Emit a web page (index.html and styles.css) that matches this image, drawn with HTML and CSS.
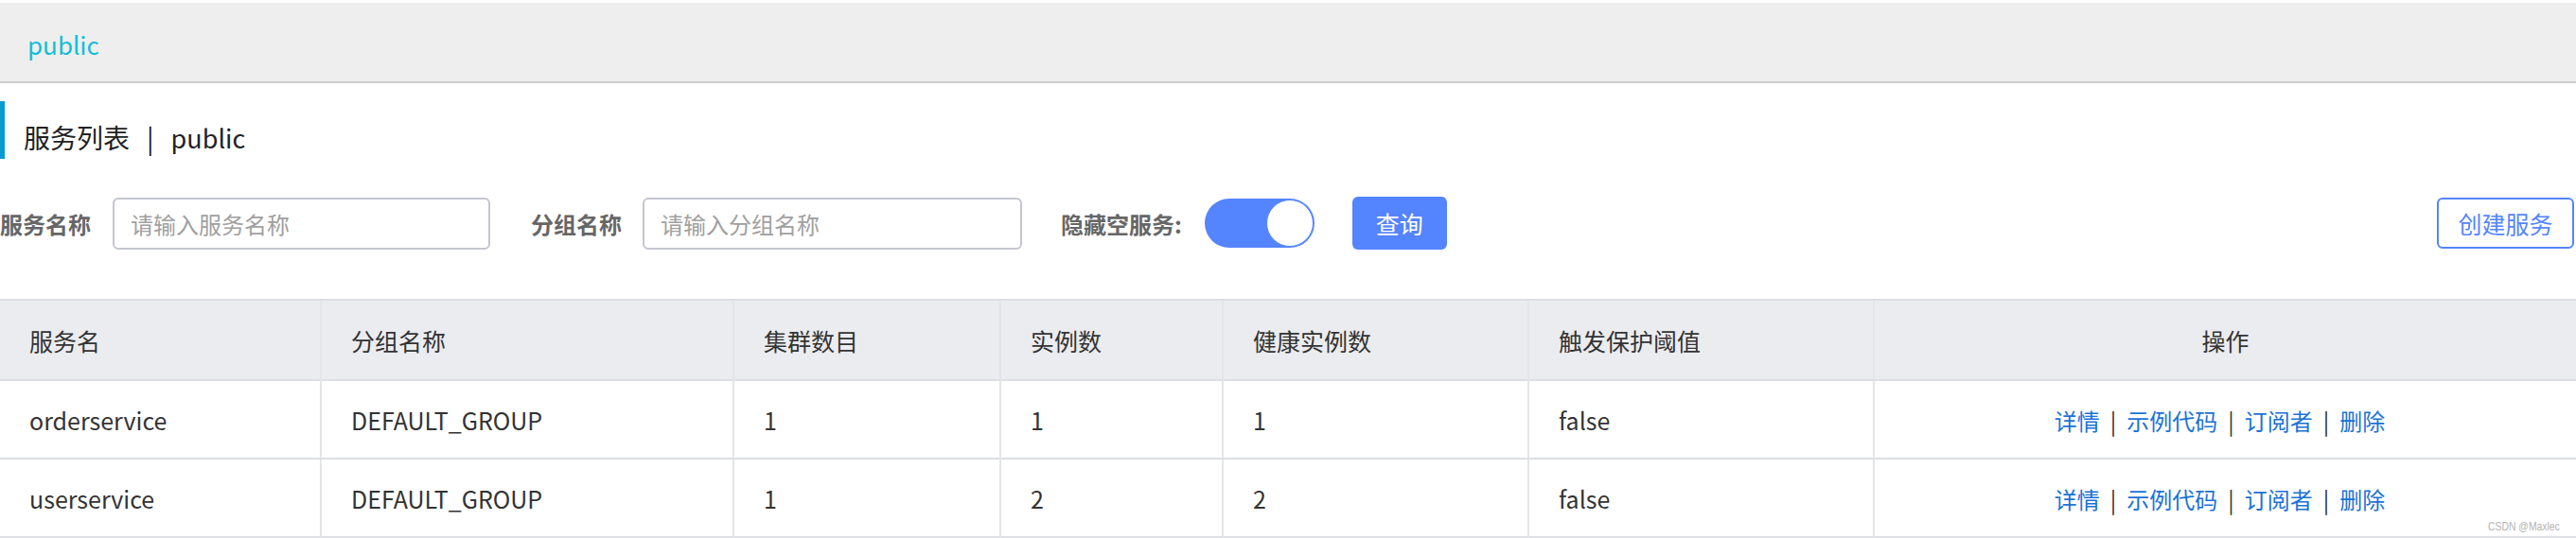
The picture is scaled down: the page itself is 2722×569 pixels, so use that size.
FILE: index.html
```html
<!DOCTYPE html>
<html lang="zh-CN">
<head>
<meta charset="utf-8">
<title>服务列表</title>
<link rel="stylesheet" href="styles.css">
</head>
<body>
  <div class="topbar"><span class="ns-link">public</span></div>

  <div class="page-title">服务列表<span class="title-sep">|</span><span class="title-ns">public</span></div>

  <div class="filters">
    <label class="f-label lbl-1">服务名称</label>
    <input class="f-input in-1" type="text" placeholder="请输入服务名称">
    <label class="f-label lbl-2">分组名称</label>
    <input class="f-input in-2" type="text" placeholder="请输入分组名称">
    <label class="f-label lbl-3">隐藏空服务:</label>
    <div class="switch"><span class="knob"></span></div>
    <button class="btn-primary">查询</button>
    <button class="btn-outline">创建服务</button>
  </div>

  <div class="table-wrap">
    <table class="svc-table">
      <colgroup>
        <col class="c1"><col class="c2"><col class="c3"><col class="c4"><col class="c5"><col class="c6"><col class="c7">
      </colgroup>
      <thead>
        <tr>
          <th>服务名</th>
          <th>分组名称</th>
          <th>集群数目</th>
          <th>实例数</th>
          <th>健康实例数</th>
          <th>触发保护阈值</th>
          <th class="center">操作</th>
        </tr>
      </thead>
      <tbody>
        <tr>
          <td>orderservice</td>
          <td>DEFAULT_GROUP</td>
          <td>1</td>
          <td>1</td>
          <td>1</td>
          <td>false</td>
          <td class="center ops"><a>详情</a><span class="sep">|</span><a>示例代码</a><span class="sep">|</span><a>订阅者</a><span class="sep">|</span><a>删除</a></td>
        </tr>
        <tr>
          <td>userservice</td>
          <td>DEFAULT_GROUP</td>
          <td>1</td>
          <td>2</td>
          <td>2</td>
          <td>false</td>
          <td class="center ops"><a>详情</a><span class="sep">|</span><a>示例代码</a><span class="sep">|</span><a>订阅者</a><span class="sep">|</span><a>删除</a></td>
        </tr>
      </tbody>
    </table>
    <div class="watermark">CSDN @Maxlec</div>
  </div>
</body>
</html>
```

FILE: styles.css
```css
html, body {
  margin: 0;
  padding: 0;
  background: #ffffff;
}
body {
  font-family: "Noto Sans CJK SC", "Open Sans", sans-serif;
  color: #333333;
  width: 2722px;
  height: 569px;
  overflow: hidden;
}

/* top namespace bar */
.topbar {
  margin-top: 3px;
  height: 85px;
  box-sizing: border-box;
  background: #eeeeee;
  border-bottom: 2px solid #cccccc;
  padding: 25px 29px 0;
  line-height: 38px;
}
.ns-link {
  font-size: 26px;
  color: #14bdd6;
}

/* page title */
.page-title {
  margin-top: 19px;
  height: 61px;
  box-sizing: border-box;
  border-left: 5px solid #0a9ad2;
  padding: 18px 0 0 20px;
  line-height: 40px;
  font-size: 28px;
  color: #222222;
}
.title-sep {
  margin: 0 18px 0 18px;
}
.title-ns {
  font-size: 27px;
}

/* filter row */
.filters {
  margin-top: 40px;
  height: 56px;
  display: flex;
  align-items: center;
}
.f-label {
  font-size: 24px;
  font-weight: bold;
  color: #666666;
  white-space: nowrap;
}
.lbl-1 { margin-right: 23px; }
.lbl-2 { margin-right: 22px; }
.lbl-3 { margin-right: 24px; }
.f-input {
  height: 55px;
  box-sizing: border-box;
  border: 2px solid #c4c6cf;
  border-radius: 6px;
  padding: 0 17px;
  font-family: "Noto Sans CJK SC", "Open Sans", sans-serif;
  font-size: 24px;
  color: #333333;
  outline: none;
  background: #ffffff;
}
.f-input::placeholder {
  color: #a0a0a0;
}
.in-1 { width: 399px; margin-right: 43px; }
.in-2 { width: 401px; margin-right: 41px; }

.switch {
  width: 116px;
  height: 52px;
  border-radius: 26px;
  background: #5584ff;
  display: flex;
  align-items: center;
  justify-content: flex-end;
  padding-right: 1px;
  box-sizing: border-box;
  margin-right: 40px;
}
.knob {
  width: 48px;
  height: 48px;
  border-radius: 50%;
  background: #ffffff;
  border: 1px solid #5584ff;
}

.btn-primary {
  width: 100px;
  height: 56px;
  border: none;
  border-radius: 6px;
  background: #5584ff;
  color: #ffffff;
  font-family: "Noto Sans CJK SC", "Open Sans", sans-serif;
  font-size: 25px;
  padding: 0;
}
.btn-outline {
  margin-left: auto;
  margin-right: 2px;
  width: 145px;
  height: 54px;
  border: 2px solid #5584ff;
  border-radius: 6px;
  background: #ffffff;
  color: #5584ff;
  font-family: "Noto Sans CJK SC", "Open Sans", sans-serif;
  font-size: 25px;
  padding: 0;
}

/* table */
.table-wrap {
  position: relative;
  margin-top: 52px;
}
.svc-table {
  width: 2722px;
  table-layout: fixed;
  border-collapse: separate;
  border-spacing: 0;
  border-top: 2px solid #dcdee3;
  font-size: 25px;
}
.c1 { width: 340px; }
.c2 { width: 436px; }
.c3 { width: 282px; }
.c4 { width: 235px; }
.c5 { width: 323px; }
.c6 { width: 365px; }
.c7 { width: 741px; }

.svc-table th,
.svc-table td {
  text-align: left;
  padding: 0 0 0 31px;
  border-bottom: 2px solid #dcdee3;
  border-right: 2px solid #e4e5e9;
  color: #333333;
  white-space: nowrap;
}
.svc-table th:last-child,
.svc-table td:last-child {
  border-right: none;
}
.svc-table th {
  height: 83px;
  background: #ebecf0;
  font-weight: normal;
}
.svc-table td {
  height: 81px;
  background: #ffffff;
}
.svc-table .center {
  text-align: center;
  padding-left: 0;
}
.svc-table td.ops {
  padding-right: 12px;
}
.ops a {
  color: #1b72d6;
  font-size: 24px;
  text-decoration: none;
}
.ops .sep {
  margin: 0 11px;
  color: #333333;
  font-size: 24px;
}

.watermark {
  position: absolute;
  right: 17px;
  bottom: 5px;
  font-family: "Liberation Sans", sans-serif;
  font-size: 13px;
  color: #b4b4b4;
  transform: scaleX(0.8);
  transform-origin: right center;
}
```
